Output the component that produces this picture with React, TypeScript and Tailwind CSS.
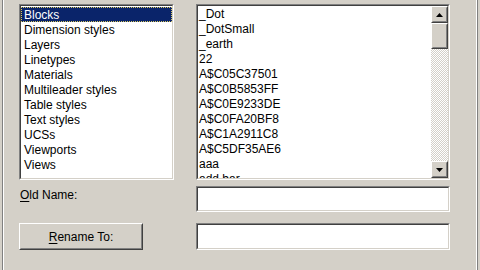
import React from "react";

const leftItems = [
  "Blocks",
  "Dimension styles",
  "Layers",
  "Linetypes",
  "Materials",
  "Multileader styles",
  "Table styles",
  "Text styles",
  "UCSs",
  "Viewports",
  "Views",
];

const rightItems = [
  "_Dot",
  "_DotSmall",
  "_earth",
  "22",
  "A$C05C37501",
  "A$C0B5853FF",
  "A$C0E9233DE",
  "A$C0FA20BF8",
  "A$C1A2911C8",
  "A$C5DF35AE6",
  "aaa",
  "add bar",
];

// classic win32 sunken well (2px)
const sunken =
  "border border-t-[#808080] border-l-[#808080] border-b-white border-r-white";
const sunkenInner =
  "border border-t-[#404040] border-l-[#404040] border-b-[#d4d0c8] border-r-[#d4d0c8]";

const raised =
  "border border-t-white border-l-white border-b-[#404040] border-r-[#404040]";
const raisedInner =
  "border border-t-[#d4d0c8] border-l-[#d4d0c8] border-b-[#808080] border-r-[#808080]";

function Well({ className, children }: { className?: string; children?: React.ReactNode }) {
  return (
    <div className={`${sunken} ${className ?? ""}`}>
      <div className={`${sunkenInner} h-full w-full bg-white overflow-hidden`}>{children}</div>
    </div>
  );
}

function ArrowButton({ dir }: { dir: "up" | "down" }) {
  return (
    <div className={`${raised} h-[17px] w-full shrink-0 bg-[#d4d0c8]`}>
      <div className={`${raisedInner} h-full w-full flex items-center justify-center`}>
        <svg width="7" height="4" viewBox="0 0 7 4">
          {dir === "up" ? (
            <polygon points="3.5,0 7,4 0,4" fill="#000" />
          ) : (
            <polygon points="0,0 7,0 3.5,4" fill="#000" />
          )}
        </svg>
      </div>
    </div>
  );
}

export default function App() {
  return (
    <div className="w-[480px] h-[270px] bg-[#d4d0c8] overflow-hidden font-['Liberation_Sans',Arial,sans-serif] text-[12px] text-black">
      <div className="mx-[2px] h-full border-l border-l-[#808080] border-r border-r-[#808080]">
        <div className="h-full border-l border-l-white border-r border-r-white pl-[15px] pt-[4px]">
          {/* Lists */}
          <div className="flex">
            <Well className="w-[155px] h-[176px]">
              <div className="flex flex-col pt-[1px]">
                {leftItems.map((item, i) => (
                  <div
                    key={item}
                    className={
                      i === 0
                        ? "h-[15px] leading-[16px] pl-[3px] bg-[#0a246a] text-white outline outline-1 outline-dotted outline-[#d8c860] -outline-offset-1"
                        : "h-[15px] leading-[16px] pl-[3px]"
                    }
                  >
                    {item}
                  </div>
                ))}
              </div>
            </Well>

            <Well className="ml-[22px] w-[254px] h-[176px]">
              <div className="flex h-full">
                <div className="flex-1 flex flex-col pl-[1px] pt-[1px]">
                  {rightItems.map((item) => (
                    <div key={item} className="h-[15px] leading-[15px] shrink-0">
                      {item}
                    </div>
                  ))}
                </div>
                <div className="w-[17px] h-full flex flex-col">
                  <ArrowButton dir="up" />
                  <div className={`${raised} h-[26px] w-full shrink-0 bg-[#d4d0c8]`}>
                    <div className={`${raisedInner} h-full w-full`} />
                  </div>
                  <div className="flex-1 bg-[repeating-conic-gradient(#d4d0c8_0_25%,#ffffff_0_50%)] bg-[length:2px_2px]" />
                  <ArrowButton dir="down" />
                </div>
              </div>
            </Well>
          </div>

          {/* Old name */}
          <div className="flex mt-[6px] items-start">
            <div className="w-[155px] pl-[1px] pt-[2px] leading-[14px]">
              <span className="underline underline-offset-2">O</span>ld Name:
            </div>
            <Well className="ml-[22px] w-[254px] h-[26px]" />
          </div>

          {/* Rename to */}
          <div className="flex mt-[11px] items-start">
            <div className="w-[155px]">
              <div className={`${raised} w-[124px] h-[27px] bg-[#d4d0c8]`}>
                <div className={`${raisedInner} h-full w-full flex items-center justify-center`}>
                  <span>
                    <span className="underline underline-offset-2">R</span>ename To:
                  </span>
                </div>
              </div>
            </div>
            <Well className="ml-[22px] w-[254px] h-[27px]" />
          </div>
        </div>
      </div>
    </div>
  );
}
